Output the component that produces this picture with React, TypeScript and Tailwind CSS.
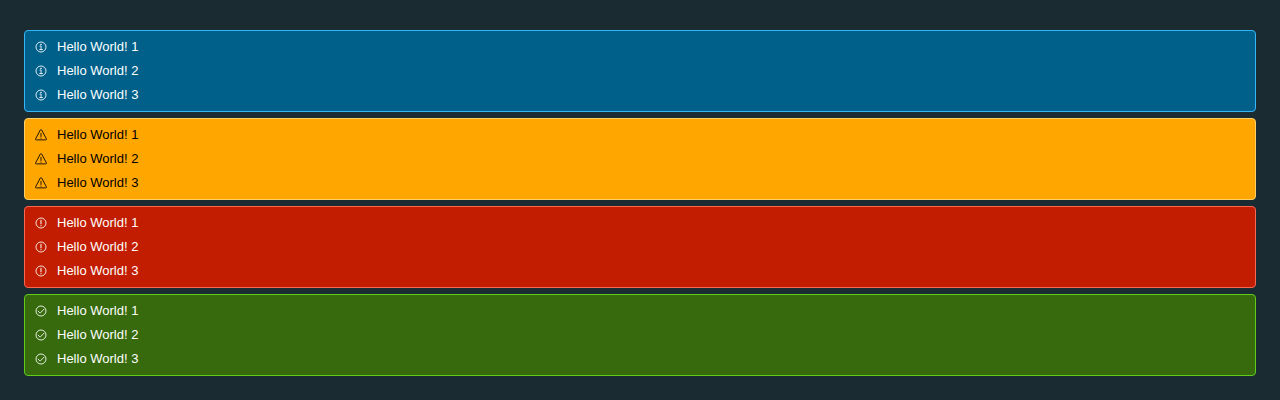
import React from 'react';

type Status = 'info' | 'warning' | 'danger' | 'success';

const alerts: { status: Status; box: string }[] = [
  { status: 'info', box: 'bg-[#00608a] border-[#32b8fa] text-white' },
  { status: 'warning', box: 'bg-[#ffa600] border-[#ffce66] text-black' },
  { status: 'danger', box: 'bg-[#c21d00] border-[#f8674f] text-white' },
  { status: 'success', box: 'bg-[#366a0d] border-[#62cb1a] text-white' },
];

const messages = ['Hello World! 1', 'Hello World! 2', 'Hello World! 3'];

function StatusIcon({ status }: { status: Status }) {
  return (
    <svg
      viewBox="0 0 36 36"
      className="size-3 shrink-0"
      fill="none"
      stroke="currentColor"
      strokeWidth="2.6"
      aria-hidden="true"
    >
      {status === 'warning' ? (
        <path
          strokeLinejoin="round"
          d="M15.9 3.2 2 29.1a2.4 2.4 0 0 0 2.1 3.5h27.8a2.4 2.4 0 0 0 2.1-3.5L20.1 3.2a2.4 2.4 0 0 0-4.2 0Z"
        />
      ) : (
        <circle cx="18" cy="18" r="15" />
      )}
      {status === 'info' && (
        <>
          <circle cx="17.9" cy="10.3" r="2.4" fill="currentColor" stroke="none" />
          <path strokeLinecap="round" d="M15 15.2h3.2v10.2M14 25.8h8.4" />
        </>
      )}
      {status === 'warning' && (
        <>
          <path strokeLinecap="round" d="M18 13v9.5" />
          <circle cx="18" cy="26.9" r="1.6" fill="currentColor" stroke="none" />
        </>
      )}
      {status === 'danger' && (
        <>
          <path strokeLinecap="round" d="M18 9.8v10.7" strokeWidth="3" />
          <circle cx="18" cy="25.8" r="1.9" fill="currentColor" stroke="none" />
        </>
      )}
      {status === 'success' && (
        <path strokeLinecap="round" strokeLinejoin="round" d="m9.4 18.3 6 6L27 12.6" />
      )}
    </svg>
  );
}

export default function App() {
  return (
    <main className="min-h-screen bg-[#1b2b32] px-6 pt-[30px] pb-6 font-['Liberation_Sans',Arial,sans-serif] text-[13px] leading-4">
      <div className="flex flex-col gap-1.5">
        {alerts.map(({ status, box }) => (
          <ul
            key={status}
            role="alert"
            className={`flex flex-col gap-2 rounded-[4px] border px-2.5 py-2 ${box}`}
          >
            {messages.map((message) => (
              <li key={message} className="flex items-center gap-2.5">
                <StatusIcon status={status} />
                <span>{message}</span>
              </li>
            ))}
          </ul>
        ))}
      </div>
    </main>
  );
}
